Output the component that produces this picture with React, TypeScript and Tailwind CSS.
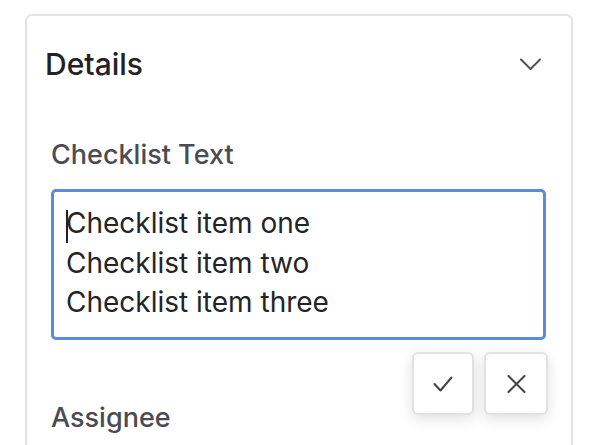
import React from "react";

export default function App() {
  return (
    <div
      className="h-[445px] w-[593px] overflow-hidden bg-white pl-[25px] pt-[14px]"
      style={{ fontFamily: "Inter, 'Noto Sans', sans-serif" }}
    >
      <div className="h-[460px] w-[548px] rounded-t-[7px] border-2 border-b-0 border-[#e3e3e3] bg-white">
        <div className="flex items-center justify-between pl-[18px] pr-[30px] pt-[30px]">
          <div className="text-[30px] font-medium leading-[36px] text-[#222226]">Details</div>
          <svg width="21" height="13" viewBox="0 0 21 13" fill="none">
            <polyline
              points="1,1.5 10.5,11 20,1.5"
              stroke="#505055"
              strokeWidth="2"
              strokeLinecap="round"
              strokeLinejoin="round"
            />
          </svg>
        </div>
        <div className="px-[24px] pt-[57px]">
          <div className="text-[27px] font-medium leading-[32px] text-[#4b4b52]">Checklist Text</div>
          <div className="relative mt-[18px]">
            <div className="relative h-[151px] w-[495px] rounded-[5px] border-[3px] border-[#5b8ae1] px-[12px] pt-[12px] text-[28px] leading-[39.5px] text-[#242428]">
              <span className="absolute left-[12px] top-[18px] h-[33px] w-[2px] bg-[#222]" />
              <div>Checklist item one</div>
              <div>Checklist item two</div>
              <div>Checklist item three</div>
            </div>
            <div className="absolute right-[-1px] top-[163px] flex gap-[10px]">
              <button className="flex h-[63px] w-[62px] items-center justify-center rounded-[6px] border-2 border-[#e2e2e2] bg-white shadow-[0_4px_14px_rgba(0,0,0,0.12)]">
                <svg width="20" height="16" viewBox="0 0 20 16" fill="none">
                  <polyline
                    points="1.5,8 7.5,14.5 18.5,1.5"
                    stroke="#444448"
                    strokeWidth="2"
                    strokeLinecap="round"
                    strokeLinejoin="round"
                  />
                </svg>
              </button>
              <button className="flex h-[63px] w-[64px] items-center justify-center rounded-[6px] border-2 border-[#e2e2e2] bg-white shadow-[0_4px_14px_rgba(0,0,0,0.12)]">
                <svg width="19" height="18" viewBox="0 0 19 18" fill="none">
                  <path
                    d="M1.5 1 L17.5 17 M17.5 1 L1.5 17"
                    stroke="#444448"
                    strokeWidth="2"
                    strokeLinecap="round"
                  />
                </svg>
              </button>
            </div>
          </div>
          <div className="mt-[62px] text-[27px] font-medium leading-[32px] text-[#4b4b52]">Assignee</div>
        </div>
      </div>
    </div>
  );
}
